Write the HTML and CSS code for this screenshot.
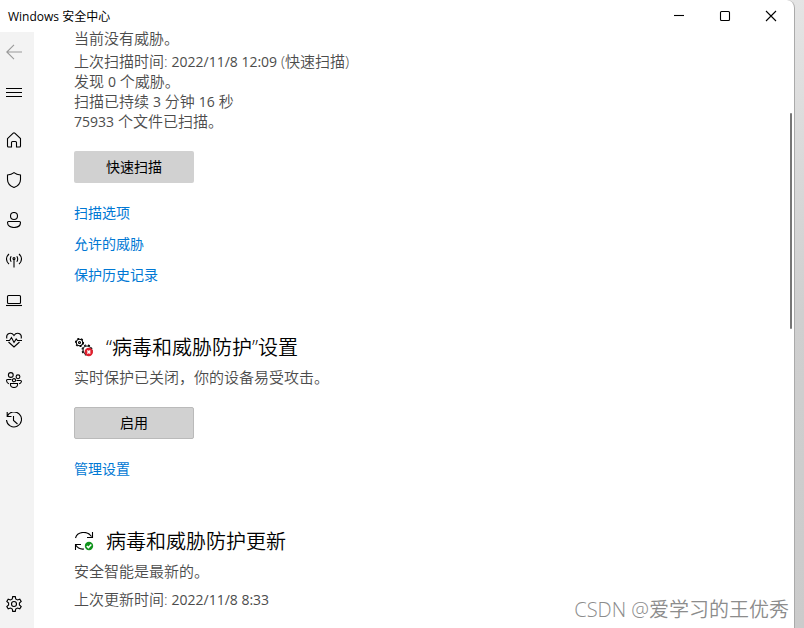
FILE: index.html
```html
<!DOCTYPE html>
<html lang="zh-CN">
<head>
  <meta charset="UTF-8">
  <meta name="viewport" content="width=device-width, initial-scale=1.0">
  <title>Windows 安全中心</title>
  <link rel="stylesheet" href="styles.css">
</head>
<body>
  <div class="window">
    <!-- Title bar -->
    <header class="titlebar">
      <div class="title">Windows 安全中心</div>
      <div class="controls">
        <button type="button" aria-label="最小化">
          <svg width="12" height="12" viewBox="0 0 12 12"><path d="M1 5.5H11"/></svg>
        </button>
        <button type="button" aria-label="最大化">
          <svg width="12" height="12" viewBox="0 0 12 12"><rect x="1.5" y="1.5" width="9" height="9" rx="1"/></svg>
        </button>
        <button type="button" aria-label="关闭">
          <svg width="12" height="12" viewBox="0 0 12 12"><path d="M1 1L11 11M11 1L1 11"/></svg>
        </button>
      </div>
    </header>

    <div class="body">
      <!-- Navigation -->
      <nav class="sidebar">
        <button type="button" class="back" aria-label="返回">
          <svg viewBox="0 0 16 16"><path d="M16 8H.8M8 .8L.8 8L8 15.2"/></svg>
        </button>
        <button type="button" class="menu" aria-label="菜单">
          <svg viewBox="0 0 16 16"><path d="M0 4.5H16M0 8.5H16M0 12.5H16"/></svg>
        </button>
        <button type="button" aria-label="主页">
          <svg viewBox="0 0 16 16"><path d="M1.5 6.6L7.2 1.2Q8 .5 8.8 1.2L14.5 6.6V14Q14.5 15 13.5 15H10.5V10.5Q10.5 9.5 9.5 9.5H6.5Q5.5 9.5 5.5 10.5V15H2.5Q1.5 15 1.5 14Z"/></svg>
        </button>
        <button type="button" aria-label="病毒和威胁防护">
          <svg viewBox="0 0 16 16"><path d="M8 .6Q10.6 2.8 14.5 3V7.5Q14.5 13 8 15.5Q1.5 13 1.5 7.5V3Q5.4 2.8 8 .6Z"/></svg>
        </button>
        <button type="button" aria-label="帐户保护">
          <svg viewBox="0 0 16 16"><circle cx="8" cy="4" r="3.5"/><path d="M2.5 9.5H13.5Q14.5 9.5 14.5 10.5C14.5 14 11.5 15.5 8 15.5S1.5 14 1.5 10.5Q1.5 9.5 2.5 9.5Z"/></svg>
        </button>
        <button type="button" aria-label="防火墙和网络保护">
          <svg viewBox="0 0 16 16"><path d="M8 7V15.5M5.2 9.8Q3.4 7 5.2 4.2M10.8 9.8Q12.6 7 10.8 4.2M3 12Q.6 10 .5 7Q.6 4 3 2M13 12Q15.4 10 15.5 7Q15.4 4 13 2"/><circle cx="8" cy="6.5" r="1"/></svg>
        </button>
        <button type="button" aria-label="应用和浏览器控制">
          <svg viewBox="0 0 16 16"><rect x="1.5" y="3.5" width="13" height="8" rx="1"/><path d="M0 13.5H16"/></svg>
        </button>
        <button type="button" aria-label="设备性能和运行状况">
          <svg viewBox="0 0 16 16"><path d="M.8 6.5C-.2 1 5.5-.3 8 3.5C10.5-.3 16.2 1 15.2 6.5M2.5 10L8 15L13.5 10M0 8.5H3.5L5.5 5.5L8 10.5L10.2 7L11.5 8.5H16"/></svg>
        </button>
        <button type="button" aria-label="家庭选项">
          <svg viewBox="0 0 16 16"><circle cx="4.8" cy="3" r="2.4"/><circle cx="12" cy="4.8" r="1.9"/><circle cx="8" cy="8.2" r="1.6"/><path d="M5.5 7.5H1.5Q.5 7.5 .6 9Q1 11.4 3 11.7M10.5 8.5H14.5Q15.5 8.5 15.4 9.6Q15 11.5 13 11.8M4.5 11.5H11.5Q12 15.5 8 15.5T4.5 11.5Z"/></svg>
        </button>
        <button type="button" aria-label="保护历史记录">
          <svg viewBox="0 0 16 16"><path d="M1.2 4.2A7.5 7.5 0 1 1 .5 8M1.2 0V4.5H5.5M7.5 4V8.5L11.5 12"/></svg>
        </button>
        <button type="button" class="settings" aria-label="设置">
          <svg viewBox="0 0 16 16"><path d="M6.3 2.9L6.7.6H9.3L9.7 2.9L11.5 4L13.8 3.2L15.2 5.5L13.4 7V9L15.2 10.5L13.8 12.8L11.5 12L9.7 13.1L9.3 15.4H6.7L6.3 13.1L4.5 12L2.2 12.8L.8 10.5L2.6 9V7L.8 5.5L2.2 3.2L4.5 4Z"/><circle cx="8" cy="8" r="2.5"/></svg>
        </button>
      </nav>

      <main class="content">
        <!-- Current threats -->
        <section>
          <p>当前没有威胁。</p>
          <p class="details">
            上次扫描时间: <span class="num">2022/11/8 12:09</span> (快速扫描)<br>
            发现 <span class="num">0</span> 个威胁。<br>
            扫描已持续 <span class="num">3</span> 分钟 <span class="num">16</span> 秒<br>
            <span class="num">75933</span> 个文件已扫描。
          </p>
          <button type="button" class="btn">快速扫描</button>
          <div class="links">
            <a href="#">扫描选项</a>
            <a href="#">允许的威胁</a>
            <a href="#">保护历史记录</a>
          </div>
        </section>

        <!-- Protection settings -->
        <section>
          <h2>
            <svg width="20" height="20" viewBox="0 0 20 20">
              <circle cx="5.5" cy="4.5" r="3.2"/>
              <circle class="teeth" cx="5.5" cy="4.5" r="4"/>
              <circle cx="5.5" cy="4.5" r="1"/>
              <circle cx="13" cy="12" r="4"/>
              <circle class="teeth" cx="13" cy="12" r="5"/>
              <circle class="bad" cx="14.8" cy="14" r="4.2"/>
              <path class="mark" d="M13.3 12.5L16.3 15.5M16.3 12.5L13.3 15.5"/>
            </svg>
            “病毒和威胁防护”设置
          </h2>
          <p>实时保护已关闭，你的设备易受攻击。</p>
          <button type="button" class="btn outlined">启用</button>
          <div class="links">
            <a href="#">管理设置</a>
          </div>
        </section>

        <!-- Protection updates -->
        <section>
          <h2>
            <svg width="20" height="20" viewBox="0 0 20 20">
              <path d="M1.5 6C3.5-.8 13.5-1.5 17.5 4.5M18.5 0V5.5H13M7 12.5H1.5V18M1.5 12.8C3.5 16 6.5 17.5 10 17"/>
              <circle class="good" cx="15" cy="14" r="4.2"/>
              <path class="mark" d="M12.8 14L14.4 15.6L17.3 12.5"/>
            </svg>
            病毒和威胁防护更新
          </h2>
          <p>安全智能是最新的。</p>
          <p class="updated">上次更新时间: <span class="num">2022/11/8 8:33</span></p>
        </section>
      </main>

      <div class="scrollbar"><div class="thumb"></div></div>
    </div>
  </div>
  <div class="watermark">CSDN @爱学习的王优秀</div>
</body>
</html>
```

FILE: styles.css
```css
* {
  box-sizing: border-box;
}

body {
  display: flex;
  height: 100vh;
  margin: 0;
  padding-right: 9px;
  overflow: hidden;
  background: linear-gradient(#e4e4e4, #cfcfcf 50%, #cbcbcb);
  font-family: "Open Sans", "Noto Sans CJK SC", sans-serif;
  font-size: 15px;
  color: #4c4c4c;
}

.window {
  flex: 1;
  display: flex;
  flex-direction: column;
  min-width: 0;
  background-color: #fff;
  border-right: 1px solid #aaa;
  border-radius: 0 8px 0 0;
}

/* Title bar */
.titlebar {
  display: flex;
  justify-content: space-between;
  height: 32px;
  flex: none;
}

.title {
  padding-left: 8px;
  font-size: 12px;
  line-height: 34px;
  color: #000;
}

.controls {
  display: flex;
}

.controls button {
  display: flex;
  align-items: center;
  justify-content: center;
  width: 46px;
  padding: 0;
  border: none;
  background: none;
}

svg {
  flex: none;
  fill: none;
  stroke: #000;
  stroke-width: 1.1;
}

.body {
  flex: 1;
  display: flex;
  min-height: 0;
}

/* Sidebar */
.sidebar {
  display: flex;
  flex-direction: column;
  flex: none;
  width: 34px;
  padding-bottom: 4px;
  background-color: #f3f3f3;
}

.sidebar button {
  display: flex;
  align-items: center;
  height: 40px;
  padding: 0 6px;
  border: none;
  background: none;
}

.sidebar svg {
  width: 16px;
  height: 16px;
}

.sidebar .back svg {
  stroke: #999;
}

.sidebar .menu {
  margin-bottom: 8px;
}

.sidebar .settings {
  margin-top: auto;
}

/* Content */
.content {
  flex: 1;
  margin-top: -4px;
  padding-left: 40px;
}

section {
  margin-bottom: 49px;
}

p {
  margin: 0;
  font-weight: 350;
  line-height: 20px;
}

.num {
  font-size: 14px;
  font-weight: 400;
  line-height: 1;
}

.details {
  margin-top: 3px;
}

.updated {
  margin-top: 8px;
}

.btn {
  display: block;
  width: 120px;
  height: 32px;
  margin: 20px 0;
  padding: 0 0 2px;
  border: none;
  border-radius: 2px;
  background-color: #d1d1d1;
  font-family: inherit;
  font-size: 14px;
  color: #000;
}

.btn.outlined {
  border: 1px solid #bababa;
}

.links {
  display: flex;
  flex-direction: column;
  align-items: flex-start;
  gap: 11px;
}

.links a {
  font-size: 14px;
  line-height: 20px;
  color: #0078d4;
  text-decoration: none;
}

h2 {
  display: flex;
  align-items: center;
  gap: 12px;
  margin: 0 0 5px;
  font-size: 20px;
  font-weight: 350;
  line-height: 28px;
  color: #000;
}

.teeth {
  stroke-dasharray: 2 2;
}

.bad {
  fill: #e01f2d;
  stroke: none;
}

.good {
  fill: #10931c;
  stroke: none;
}

.mark {
  stroke: #fff;
  stroke-width: 1.5;
}

/* Scrollbar */
.scrollbar {
  width: 4px;
  padding-top: 81px;
}

.thumb {
  width: 2px;
  height: 42%;
  border-radius: 1px;
  background-color: #777;
}

.watermark {
  position: absolute;
  right: 15px;
  bottom: 4px;
  font-size: 20px;
  font-weight: 350;
  line-height: 28px;
  color: #8c8c8c;
}
```
